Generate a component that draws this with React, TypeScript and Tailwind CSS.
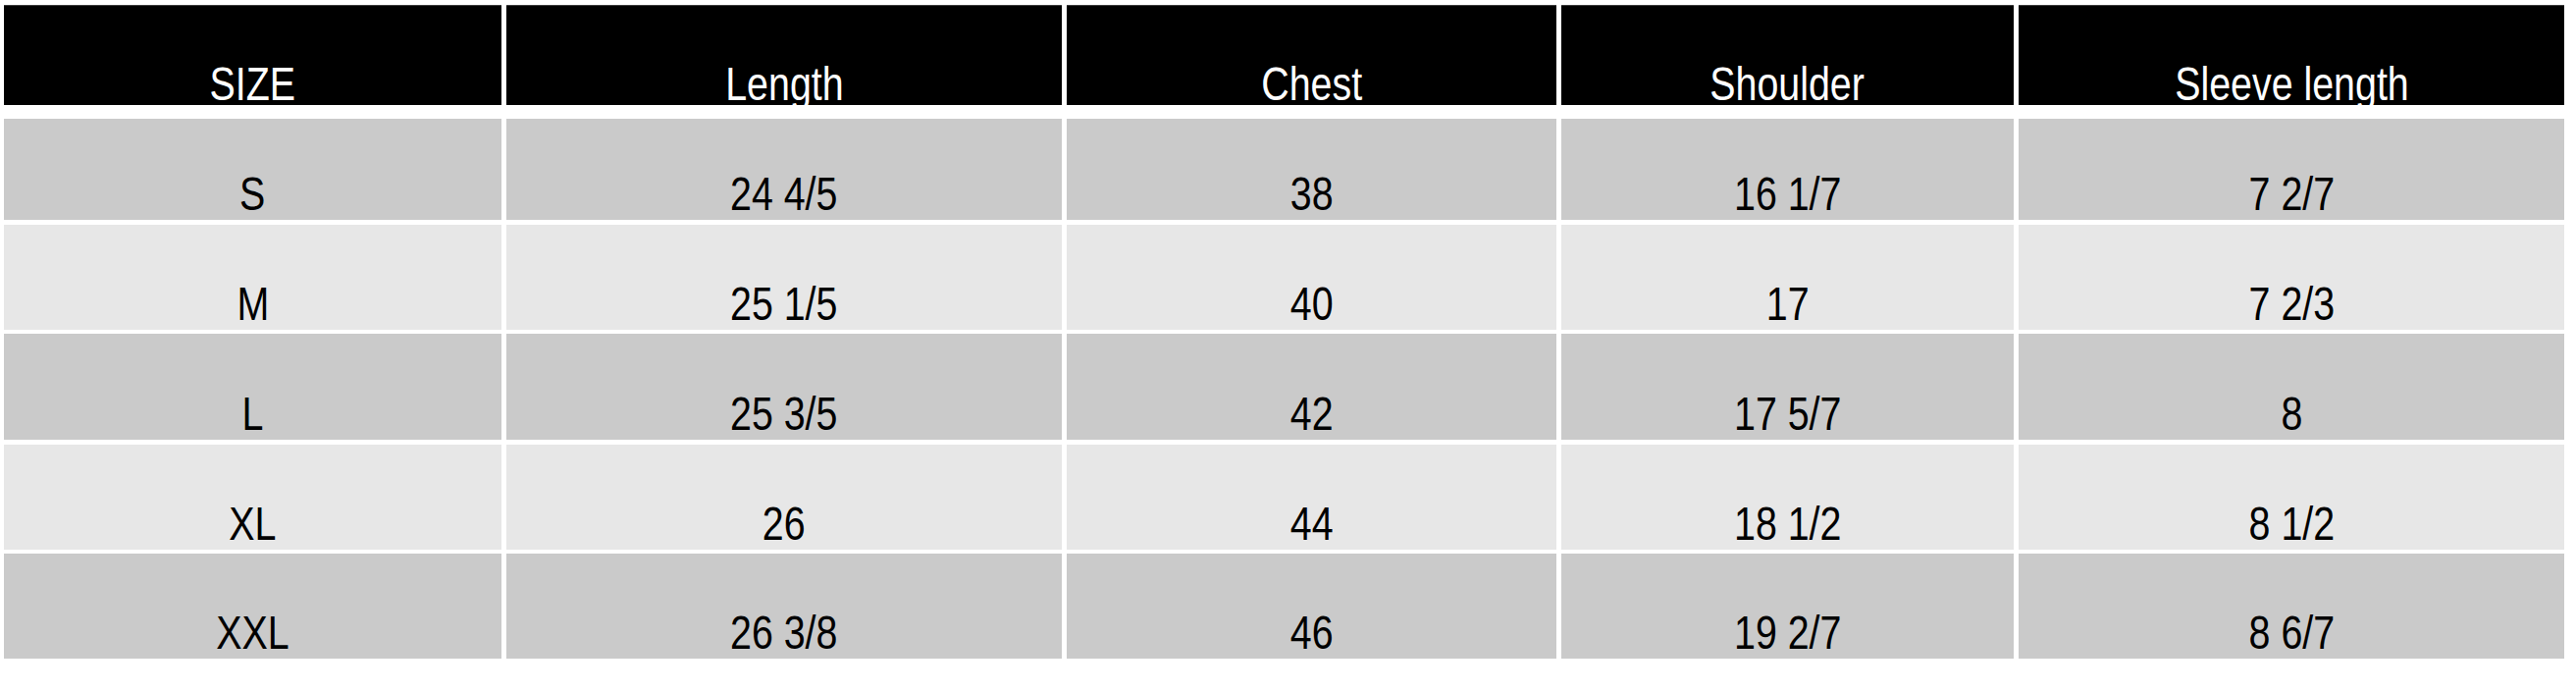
const columns = ["SIZE", "Length", "Chest", "Shoulder", "Sleeve length"];

const rows = [
  ["S", "24 4/5", "38", "16 1/7", "7 2/7"],
  ["M", "25 1/5", "40", "17", "7 2/3"],
  ["L", "25 3/5", "42", "17 5/7", "8"],
  ["XL", "26", "44", "18 1/2", "8 1/2"],
  ["XXL", "26 3/8", "46", "19 2/7", "8 6/7"],
];

// narrow look: Arial-metric sans squeezed horizontally
const font = "font-['Liberation_Sans',Arial,sans-serif]";

function Label({ text }: { text: string }) {
  return <span className="inline-block whitespace-nowrap scale-x-[0.82]">{text}</span>;
}

export default function App() {
  return (
    <div className={["min-h-screen w-full bg-white pl-[4px] pt-[5px]", font].join(" ")}>
      <div className="w-[2609px] flex flex-col">
        {/* header */}
        <div className="grid grid-cols-[507px_566px_499px_461px_556px] gap-x-[5px] h-[102px]">
          {columns.map((c) => (
            <div
              key={c}
              className="bg-black border-t border-[#3a3a3a] flex items-end justify-center text-white text-[48px] leading-[43px]"
            >
              <Label text={c} />
            </div>
          ))}
        </div>

        {/* body */}
        <div className="mt-[14px] grid grid-cols-[507px_566px_499px_461px_556px] grid-rows-[103px_107px_108px_107px_107px] gap-x-[5px] gap-y-[4.5px]">
          {rows.map((r, i) =>
            r.map((v, j) => (
              <div
                key={i + "-" + j}
                className={[
                  "flex items-end justify-center text-black text-[48px] leading-[53px]",
                  i % 2 === 0 ? "bg-[#cacaca]" : "bg-[#e7e7e7]",
                ].join(" ")}
              >
                <Label text={v} />
              </div>
            ))
          )}
        </div>
      </div>
    </div>
  );
}
